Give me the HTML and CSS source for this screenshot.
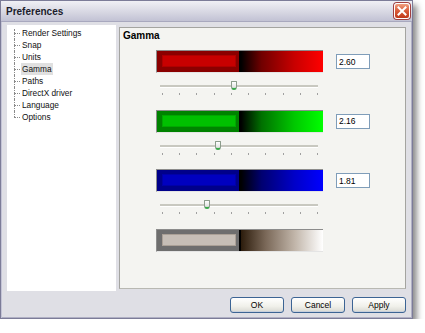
FILE: index.html
```html
<!DOCTYPE html>
<html lang="en">
<head>
  <meta charset="UTF-8">
  <title>Preferences</title>
  <link rel="stylesheet" href="styles.css">
</head>
<body>
  <div class="window">
    <div class="titlebar">
      <span class="title">Preferences</span>
      <span class="close">
        <svg width="10" height="10" viewBox="0 0 10 10"><path d="M1.5 1.5 L8.5 8.5 M8.5 1.5 L1.5 8.5" stroke="#fff" stroke-width="2" stroke-linecap="square"/></svg>
      </span>
    </div>
    <div class="body">
      <div class="content">
        <ul class="tree">
          <li><span>Render Settings</span></li>
          <li><span>Snap</span></li>
          <li><span>Units</span></li>
          <li><span class="selected">Gamma</span></li>
          <li><span>Paths</span></li>
          <li><span>DirectX driver</span></li>
          <li><span>Language</span></li>
          <li><span>Options</span></li>
        </ul>
        <div class="panel">
          <h3>Gamma</h3>
          <div class="channels">
            <div class="channel red">
              <div class="row">
                <div class="bar"><div class="swatch"><div class="inner"></div></div><div class="ramp"></div></div>
                <input class="value" type="text" value="2.60">
              </div>
              <div class="slider">
                <div class="track"><div class="thumb" style="left: 46.7%"></div></div>
                <div class="ticks"><i></i><i></i><i></i><i></i><i></i><i></i><i></i><i></i><i></i><i></i></div>
              </div>
            </div>
            <div class="channel green">
              <div class="row">
                <div class="bar"><div class="swatch"><div class="inner"></div></div><div class="ramp"></div></div>
                <input class="value" type="text" value="2.16">
              </div>
              <div class="slider">
                <div class="track"><div class="thumb" style="left: 36.9%"></div></div>
                <div class="ticks"><i></i><i></i><i></i><i></i><i></i><i></i><i></i><i></i><i></i><i></i></div>
              </div>
            </div>
            <div class="channel blue">
              <div class="row">
                <div class="bar"><div class="swatch"><div class="inner"></div></div><div class="ramp"></div></div>
                <input class="value" type="text" value="1.81">
              </div>
              <div class="slider">
                <div class="track"><div class="thumb" style="left: 29.6%"></div></div>
                <div class="ticks"><i></i><i></i><i></i><i></i><i></i><i></i><i></i><i></i><i></i><i></i></div>
              </div>
            </div>
            <div class="channel grey">
              <div class="row">
                <div class="bar"><div class="swatch"><div class="inner"></div></div><div class="ramp"></div></div>
              </div>
            </div>
          </div>
        </div>
      </div>
      <div class="buttons">
        <button>OK</button>
        <button>Cancel</button>
        <button>Apply</button>
      </div>
    </div>
  </div>
</body>
</html>
```

FILE: styles.css
```css
body { margin: 0; background: #fff; font-family: "Liberation Sans", Arial, sans-serif; font-size: 8px; color: #000; }

.window { width: 413px; height: 319px; box-sizing: border-box; border: 1px solid #7c7c98; background: #dfdfe5; box-shadow: 4px 5px 6px rgba(0, 0, 0, 0.45), inset 1px 0 0 #c4c4d6, inset -1px -1px 0 #b0b0c4; display: flex; flex-direction: column; }

.titlebar { height: 21px; flex-shrink: 0; display: flex; align-items: center; justify-content: space-between; padding: 0 2px 0 5px; background: linear-gradient(#f0f0f5, #dcdce6 45%, #c2c2d4); border-bottom: 1px solid #a8a8be; box-sizing: border-box; }
.title { font-size: 10px; font-weight: bold; color: #1c1c2c; }
.close { width: 16px; height: 16px; box-sizing: border-box; border: 1px solid #fff; border-radius: 3px; background: linear-gradient(#f0a080, #d85a38 50%, #c03818); display: flex; align-items: center; justify-content: center; box-shadow: 0 0 0 1px #a04040; }

.body { flex: 1; display: flex; flex-direction: column; padding: 3px 5px 0 6px; }
.content { display: flex; align-items: flex-start; }

.tree { list-style: none; margin: 0; padding: 2px 0 0 14px; width: 109px; height: 266px; box-sizing: border-box; background: #fff; font-size: 8.3px; color: #111; }
.tree li { position: relative; height: 12px; line-height: 12px; }
.tree li::before { content: ""; position: absolute; left: -7px; top: 6px; width: 6px; border-top: 1px dotted #8a8a8a; }
.tree li::after { content: ""; position: absolute; left: -7px; top: 0; bottom: 0; border-left: 1px dotted #8a8a8a; }
.tree li:first-child::after { top: 2px; }
.tree li:last-child::after { bottom: 6px; }
.tree span { padding: 1px 1px; }
.tree .selected { background: #e0e0e0; }

.panel { margin: 2px 0 0 3px; width: 287px; height: 262px; box-sizing: border-box; border: 1px solid #a4a4a0; border-bottom-color: #b8b8b2; background: #f4f4f1; padding: 2px 3px; }
.panel h3 { margin: 0; font-size: 10px; line-height: 12px; font-weight: bold; }

.channels { margin: 8px 0 0 33px; display: flex; flex-direction: column; }
.channel { height: 59.5px; }
.row { display: flex; align-items: center; }

.bar { width: 167px; height: 23px; box-sizing: border-box; display: flex; border-top: 1px solid #8c8c8c; border-left: 1px solid #8c8c8c; border-bottom: 1px solid #e4e4e4; }
.swatch { width: 82px; box-sizing: border-box; padding: 4px 0 0 5px; }
.swatch .inner { width: 74px; height: 12px; box-sizing: border-box; border: 1px solid; }
.ramp { flex: 1; border-left: 2px solid #000; }
.value { margin-left: 13px; width: 34px; height: 15px; box-sizing: border-box; border: 1px solid #7f9db9; padding: 0 2px; font-family: "Liberation Sans", Arial, sans-serif; font-size: 8.5px; background: #fff; }

.red .swatch { background: #8a0000; }
.red .inner { background: #c80000; border-color: #b00000; }
.red .ramp { background: linear-gradient(to right, #000, #700000 25%, #c80000 65%, #ff0000); }
.green .swatch { background: #008200; }
.green .inner { background: #00c000; border-color: #00a800; }
.green .ramp { background: linear-gradient(to right, #000, #007000 25%, #00c800 65%, #00ff00); }
.blue .swatch { background: #00008a; }
.blue .inner { background: #0000c0; border-color: #0000a8; }
.blue .ramp { background: linear-gradient(to right, #000, #000070 25%, #0000c8 65%, #0000ff); }
.grey .swatch { background: #6e6e6e; }
.grey .inner { background: #c6beb6; border-color: #aaa096; }
.grey .ramp { background: linear-gradient(to right, #2c1c0c, #7a6858 30%, #c0b4a8 65%, #fff); }

.slider { padding: 12px 0 0 4px; }
.track { position: relative; width: 158px; height: 2px; background: #c8c8c0; border-bottom: 1px solid #fff; }
.thumb { position: absolute; top: -4px; width: 6px; height: 9px; margin-left: -3px; box-sizing: border-box; border: 1px solid #8c9c8c; border-bottom: 2px solid #3aa84a; border-radius: 1px 1px 3px 3px; background: linear-gradient(#fff, #dedede); }
.ticks { display: flex; justify-content: space-between; width: 156px; margin: 5px 0 0 2px; }
.ticks i { width: 1px; height: 2px; background: #a0a0a0; }

.buttons { display: flex; justify-content: flex-end; gap: 7px; margin-top: 6px; padding-right: 1px; }
.buttons button { width: 54px; height: 16px; padding: 0; border: 1px solid #3c6494; border-radius: 3px; background: linear-gradient(#ffffff, #f0f0ea 60%, #d8d8d2); font-family: "Liberation Sans", Arial, sans-serif; font-size: 8.5px; color: #000; box-shadow: inset 0 -1px 0 #c8d0dc; }
```
